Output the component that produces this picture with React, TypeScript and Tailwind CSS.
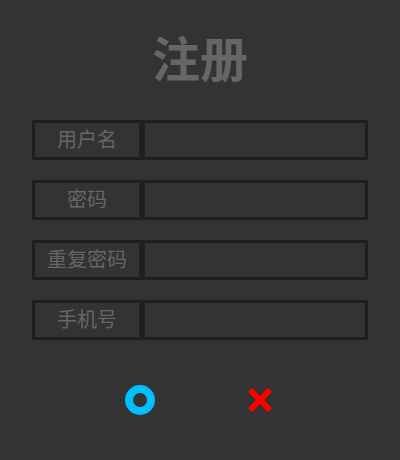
import React from "react";

const fields = ["用户名", "密码", "重复密码", "手机号"];

const App: React.FC = () => {
  return (
    <div className="w-[400px] h-[460px] bg-[#333333] font-['Noto_Sans_CJK_SC',sans-serif] overflow-hidden">
      {/* Title */}
      <h1 className="pt-[32px] h-[120px] text-center text-[48px] leading-[48px] font-bold text-[#666666]">
        注册
      </h1>

      {/* Form rows */}
      <div className="w-[336px] mx-auto flex flex-col gap-[20px]">
        {fields.map((label, i) => (
          <div key={label} className="flex h-[40px]">
            <div className="w-[110px] border-[3px] border-[#1f1f1f] flex items-center justify-center pb-[3px] text-[20px] leading-none text-[#666666]">
              {label}
            </div>
            <input
              autoFocus={i === 0}
              className="flex-1 min-w-0 border-[3px] border-[#1f1f1f] bg-transparent outline-none px-[1px] text-[18px] text-[#999999] caret-[#999999]"
            />
          </div>
        ))}
      </div>

      {/* Buttons */}
      <div className="flex justify-center gap-[90px] mt-[45px]">
        <button className="w-[30px] h-[30px] rounded-full border-[8px] border-[#00bfff]" />
        <button className="w-[30px] h-[30px] flex items-center justify-center">
          <svg width="26" height="26" viewBox="0 0 26 26">
            <path d="M3 3 L23 23 M23 3 L3 23" stroke="#ff0000" strokeWidth="6" />
          </svg>
        </button>
      </div>
    </div>
  );
};

export default App;
